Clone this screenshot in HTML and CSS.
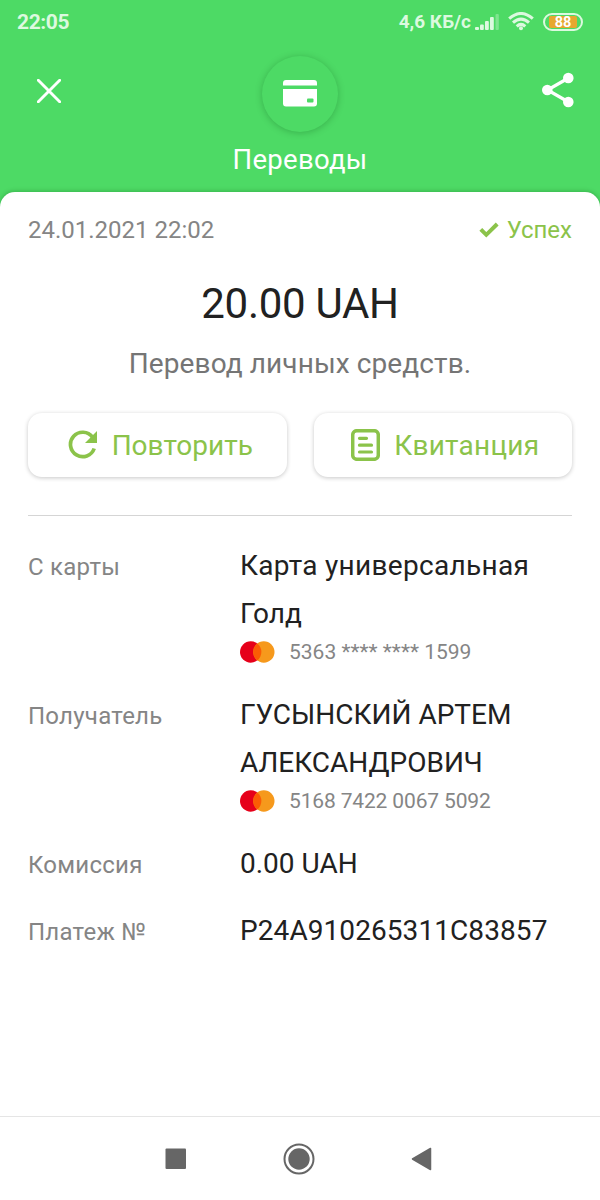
FILE: index.html
```html
<!DOCTYPE html>
<html lang="ru">
<head>
<meta charset="utf-8">
<meta name="viewport" content="width=device-width">
<title>Переводы</title>
<link rel="stylesheet" href="styles.css">
</head>
<body>
<div class="screen">
  <header class="header">
    <div class="status">
      <span class="clock">22:05</span>
      <div class="status-right">
        <span class="speed">4,6 КБ/с</span>
        <svg class="signal" width="24" height="18" viewBox="0 0 24 18"><g fill="#dcf9df"><rect x="0" y="14" width="4" height="3" rx="1"/><rect x="5" y="11.500" width="3.800" height="5.500" rx="1"/><rect x="10" y="8" width="3.800" height="9" rx="1"/><rect x="15" y="4" width="3.800" height="13" rx="1"/><rect x="20.500" y="1" width="3.300" height="16" rx="1" opacity=".35"/></g></svg>
        <svg class="wifi" width="26" height="19" viewBox="0 0 26 19" fill="none" stroke="#dcf9df" stroke-width="3"><path d="M1.200 6.700Q13-3.700 24.800 6.700M5 10.700Q13 3.500 21 10.700M8.700 14.400Q13 10.400 17.300 14.400"/><circle cx="13" cy="16.300" r="2" fill="#dcf9df" stroke="none"/></svg>
        <span class="battery"><span class="charge">88</span></span>
      </div>
    </div>
    <div class="toolbar">
      <svg class="close" width="24" height="24" viewBox="0 0 24 24" fill="none" stroke="#fff" stroke-width="2.900" stroke-linecap="round"><path d="M1.300 1.300 22.700 22.700M22.700 1.300 1.300 22.700"/></svg>
      <div class="emblem">
        <svg width="34" height="27" viewBox="0 0 34 27"><path fill="#fff" d="M3 0H31Q34 0 34 3V5.500H0V3Q0 0 3 0ZM0 9H34V23.500Q34 26.500 31 26.500H3Q0 26.500 0 23.500Z"/><rect x="24" y="18.500" width="6.500" height="4" rx="1" fill="#4dda65"/></svg>
      </div>
      <svg class="share" width="32" height="36" viewBox="0 0 32 36"><path d="M26.500 6 5.500 18 26.500 30" fill="none" stroke="#fff" stroke-width="3.200"/><g fill="#fff"><circle cx="26.300" cy="6" r="5.300"/><circle cx="5.300" cy="18" r="5.300"/><circle cx="26.300" cy="30" r="5.300"/></g></svg>
    </div>
    <h1 class="title">Переводы</h1>
  </header>

  <main class="sheet">
    <div class="meta">
      <span class="date">24.01.2021 22:02</span>
      <span class="result"><svg width="20" height="16" viewBox="0 0 20 16"><path d="M1.800 7.300 7.300 12.800 18.200 2" fill="none" stroke="#8bc34a" stroke-width="4"/></svg><span>Успех</span></span>
    </div>
    <div class="amount">20.00 UAH</div>
    <div class="purpose">Перевод личных средств.</div>
    <div class="actions">
      <button class="action repeat"><svg width="30" height="30" viewBox="0 0 30 30"><path d="M24.500 7.200A12.200 12.200 0 1 0 26.200 18.500" fill="none" stroke="#8bc34a" stroke-width="3.700"/><path d="M29 1V13H17Z" fill="#8bc34a"/></svg><span>Повторить</span></button>
      <button class="action receipt"><svg width="29" height="32" viewBox="0 0 29 32" fill="none" stroke="#8bc34a" stroke-width="3.500"><rect x="1.700" y="1.700" width="25.600" height="28.600" rx="4"/><path d="M8.500 9.300H15.500M8.500 16.200H20.500M8.500 23H20.500" stroke-width="3.200" stroke-linecap="round"/></svg><span>Квитанция</span></button>
    </div>
    <dl class="details">
      <div class="row tall">
        <dt class="label">С карты</dt>
        <dd class="value"><div class="line wide">Карта универсальная</div><div class="line">Голд</div>
          <div class="card"><svg width="35" height="22" viewBox="0 0 36 22"><circle cx="11" cy="11" r="11" fill="#e6001a"/><circle cx="24.500" cy="11" r="11" fill="#f6991c"/><path d="M17.750 2.320A11 11 0 0 1 17.750 19.680 11 11 0 0 1 17.750 2.320Z" fill="#fb5c04"/></svg><span>5363 **** **** 1599</span></div></dd>
      </div>
      <div class="row tall">
        <dt class="label">Получатель</dt>
        <dd class="value"><div class="line">ГУСЫНСКИЙ АРТЕМ</div><div class="line">АЛЕКСАНДРОВИЧ</div>
          <div class="card"><svg width="35" height="22" viewBox="0 0 36 22"><circle cx="11" cy="11" r="11" fill="#e6001a"/><circle cx="24.500" cy="11" r="11" fill="#f6991c"/><path d="M17.750 2.320A11 11 0 0 1 17.750 19.680 11 11 0 0 1 17.750 2.320Z" fill="#fb5c04"/></svg><span class="digits">5168 7422 0067 5092</span></div></dd>
      </div>
      <div class="row fee">
        <dt class="label">Комиссия</dt>
        <dd class="value"><div class="line">0.00 UAH</div></dd>
      </div>
      <div class="row">
        <dt class="label">Платеж №</dt>
        <dd class="value"><div class="line number">P24A910265311C83857</div></dd>
      </div>
    </dl>
  </main>

  <nav class="navbar">
    <svg width="22" height="22" viewBox="0 0 22 22"><rect x=".5" y=".5" width="20.500" height="20.500" rx="1" fill="#666"/></svg>
    <svg width="32" height="32" viewBox="0 0 32 32"><circle cx="16" cy="16" r="14.500" fill="none" stroke="#666" stroke-width="2"/><circle cx="16" cy="16" r="10.700" fill="#666"/></svg>
    <svg width="22" height="24" viewBox="0 0 22 24"><path d="M1.500 12 19.500 1.500V22.500Z" fill="#666" stroke="#666" stroke-width="1.500" stroke-linejoin="round"/></svg>
  </nav>
</div>
</body>
</html>
```
FILE: styles.css
```css
* { box-sizing: border-box; }
body { margin: 0; font-family: Roboto, "Noto Sans", sans-serif; color: #212121; background: #fff; }
svg { display: block; flex: none; }
.screen { width: 600px; height: 1200px; display: flex; flex-direction: column; overflow: hidden; background: #4dda65; }
.header { height: 192px; flex: none; color: #fff; }
.status { height: 43px; padding: 0 17px; display: flex; align-items: center; justify-content: space-between; font-weight: 700; color: #dcf9df; white-space: nowrap; }
.clock { font-size: 21px; letter-spacing: -.4px; }
.status-right { display: flex; align-items: center; }
.speed { font-size: 19px; margin-right: 4px; }
.wifi { margin: 0 9px 0 9px; }
.battery { width: 40px; height: 18px; border: 2px solid #dcf9df; border-radius: 9px; padding: 1px 4px; display: flex; }
.charge { flex: 1; background: #e7a72f; border-radius: 2px; font-size: 14.5px; line-height: 13px; text-align: center; color: #fff; }
.toolbar { height: 95px; padding: 0 26px 0 37px; display: flex; align-items: center; justify-content: space-between; }
.emblem { width: 76px; height: 76px; margin: 6px 0 0 -4px; border-radius: 50%; display: flex; align-items: center; justify-content: center; background: #4dda65; box-shadow: 0 1px 7px rgba(0, 60, 10, .26); }
.share { margin-bottom: 2px; }
.title { margin: 3px 0 0; font-size: 27.5px; font-weight: 400; line-height: 38px; text-align: center; letter-spacing: .3px; }
.sheet { flex: 1; padding: 0 28px; border-radius: 15px 15px 0 0; background: #fff; box-shadow: 0 -1px 4px rgba(0, 70, 10, .25); }
.meta { height: 76px; display: flex; justify-content: space-between; align-items: center; font-size: 24px; color: #858585; }
.result { display: flex; align-items: center; gap: 8px; color: #8bc34a; }
.amount { height: 70px; line-height: 71px; font-size: 42px; letter-spacing: -.3px; text-align: center; }
.purpose { height: 52px; line-height: 52px; font-size: 28px; letter-spacing: .1px; color: #757575; text-align: center; }
.actions { margin-top: 23px; display: grid; grid-template-columns: 1fr 1fr; gap: 27px; }
.action { height: 64px; padding: 0; border: 0; border-radius: 14px; display: flex; align-items: center; justify-content: center; gap: 14px; background: #fff; box-shadow: 0 1px 4px rgba(0, 0, 0, .22); font: 400 28px Roboto, sans-serif; color: #8bc34a; }
.repeat { padding-left: 6px; }
.receipt { padding-left: 5px; letter-spacing: .25px; }
.details { margin: 38px 0 0; padding-top: 26px; border-top: 1px solid #d5d5d5; }
.row { display: grid; grid-template-columns: 212px 1fr; }
.tall { height: 149px; }
.fee { height: 67px; }
.label { font-size: 24px; line-height: 50px; letter-spacing: .25px; color: #858585; }
.value { margin: 0; white-space: nowrap; }
.line { font-size: 28px; line-height: 47.5px; }
.wide { letter-spacing: .3px; }
.number { letter-spacing: .08px; }
.card { display: flex; align-items: center; gap: 14px; height: 30px; font-size: 21px; color: #858585; }
.digits { letter-spacing: -.15px; }
.navbar { height: 84px; flex: none; padding: 0 167px 0 165px; display: flex; align-items: center; justify-content: space-between; border-top: 1px solid #e5e5e5; background: #fff; }
```
